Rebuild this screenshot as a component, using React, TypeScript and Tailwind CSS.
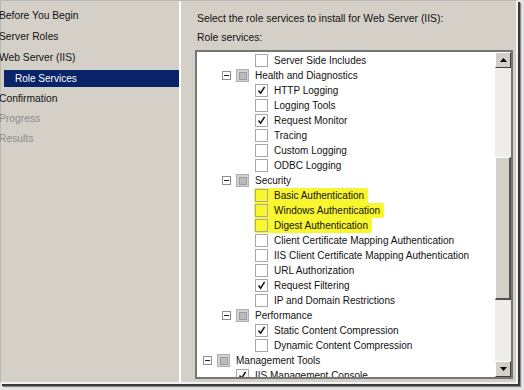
import React from "react";

type Row = {
  label: string;
  level: 0 | 1 | 2;
  group?: boolean;
  checked?: boolean;
  marked?: boolean;
};

const rows: Row[] = [
  { label: "Server Side Includes", level: 2 },
  { label: "Health and Diagnostics", level: 1, group: true },
  { label: "HTTP Logging", level: 2, checked: true },
  { label: "Logging Tools", level: 2 },
  { label: "Request Monitor", level: 2, checked: true },
  { label: "Tracing", level: 2 },
  { label: "Custom Logging", level: 2 },
  { label: "ODBC Logging", level: 2 },
  { label: "Security", level: 1, group: true },
  { label: "Basic Authentication", level: 2, marked: true },
  { label: "Windows Authentication", level: 2, marked: true },
  { label: "Digest Authentication", level: 2, marked: true },
  { label: "Client Certificate Mapping Authentication", level: 2 },
  { label: "IIS Client Certificate Mapping Authentication", level: 2 },
  { label: "URL Authorization", level: 2 },
  { label: "Request Filtering", level: 2, checked: true },
  { label: "IP and Domain Restrictions", level: 2 },
  { label: "Performance", level: 1, group: true },
  { label: "Static Content Compression", level: 2, checked: true },
  { label: "Dynamic Content Compression", level: 2 },
  { label: "Management Tools", level: 0, group: true },
  { label: "IIS Management Console", level: 1, checked: true },
];

const indent = ["pl-[4px]", "pl-[23px]", "pl-[42px]"];

const steps = [
  { label: "Before You Begin", h: "h-[21px]" },
  { label: "Server Roles", h: "h-[21px]" },
  { label: "Web Server (IIS)", h: "h-[21px]" },
  { label: "Role Services", h: "h-[21px]", active: true },
  { label: "Confirmation", h: "h-[20px]" },
  { label: "Progress", h: "h-[20px]", dim: true },
  { label: "Results", h: "h-[20px]", dim: true },
];

function Expander() {
  return (
    <span className="flex h-[9px] w-[9px] items-center justify-center border border-[#8f8f8f] bg-white">
      <span className="h-px w-[5px] bg-[#222]" />
    </span>
  );
}

function GroupBox() {
  return (
    <span className="flex h-[13px] w-[13px] shrink-0 items-center justify-center border border-[#b0b0b0] bg-[#d2d2d2]">
      <span className="h-[8px] w-[8px] border border-[#9c9c9c] bg-[#bcbcbc]" />
    </span>
  );
}

function CheckBox({ checked, clear }: { checked?: boolean; clear?: boolean }) {
  return (
    <span
      className={`flex h-[13px] w-[13px] shrink-0 items-center justify-center border border-[#a8a8a8] ${
        clear ? "bg-transparent" : "bg-white"
      }`}
    >
      {checked && (
        <svg width="9" height="9" viewBox="0 0 9 9">
          <path d="M1.5 4.5 L3.6 7.2 L7.6 0.8" stroke="#111" strokeWidth="1.5" fill="none" />
        </svg>
      )}
    </span>
  );
}

function ArrowButton({ up }: { up?: boolean }) {
  return (
    <div className="flex h-[16px] w-[16px] shrink-0 items-center justify-center border-t border-l border-b border-r border-t-white border-l-white border-b-[#404040] border-r-[#404040] bg-[#d4d0c8]">
      <svg width="7" height="4" viewBox="0 0 7 4">
        {up ? <path d="M0 4 L3.5 0 L7 4 Z" fill="#000" /> : <path d="M0 0 L3.5 4 L7 0 Z" fill="#000" />}
      </svg>
    </div>
  );
}

function TreeRow({ row }: { row: Row }) {
  const box = row.group ? <GroupBox /> : <CheckBox checked={row.checked} clear={row.marked} />;
  return (
    <div className={`flex h-[15px] shrink-0 items-center whitespace-nowrap ${indent[row.level]}`}>
      <span className="flex w-[13px] shrink-0 justify-center">{row.group && <Expander />}</span>
      {row.marked ? (
        <span className="ml-[2px] flex h-[15px] items-center rounded-[2px] bg-[#f8f62e] pl-px pr-[4px]">
          {box}
          <span className="ml-[6px]">{row.label}</span>
        </span>
      ) : (
        <>
          <span className="ml-[3px]">{box}</span>
          <span className="ml-[6px]">{row.label}</span>
        </>
      )}
    </div>
  );
}

export default function App() {
  return (
    <div className="h-[390px] w-[524px] overflow-hidden bg-[#e4e4e4] font-['Liberation_Sans',Arial,sans-serif] text-[10px] leading-[12px] text-[#111]">
      <div className="flex h-[384px] w-[518px] border-t border-l border-r-2 border-b-2 border-t-[#b8b8b8] border-l-[#b8b8b8] border-r-[#f2f2f2] border-b-[#f2f2f2] bg-[#d4d0c8] shadow-[2px_2px_0_#3a3a3a,3px_3px_1px_#8a8a8a]">
        {/* wizard steps */}
        <div className="w-[178px] shrink-0 pt-[4px]">
          {steps.map((s) =>
            s.active ? (
              <div key={s.label} className={`flex items-center ${s.h}`}>
                <div className="ml-[3px] flex h-[17px] w-full items-center bg-[#0a246a] pl-[11px] text-white">
                  {s.label}
                </div>
              </div>
            ) : (
              <div
                key={s.label}
                className={`-ml-[2px] flex items-center text-[10.3px] ${s.h} ${s.dim ? "text-[#8c8c8c]" : ""}`}
              >
                {s.label}
              </div>
            )
          )}
        </div>

        <div className="w-[2px] shrink-0 bg-white" />

        {/* role services */}
        <div className="flex flex-1 flex-col pl-[14px] pr-[3px] pt-[12px]">
          <div className="pl-[2px] text-[10.4px]">Select the role services to install for Web Server (IIS):</div>
          <div className="mt-[7px] pl-[2px] text-[10.4px]">Role services:</div>

          <div className="mt-[6px] flex h-[329px] w-[318px] border-2 border-[#767676] bg-white">
            <div className="flex flex-1 flex-col overflow-hidden pt-px">
              {rows.map((r) => (
                <TreeRow key={r.label} row={r} />
              ))}
            </div>

            <div className="flex w-[16px] shrink-0 flex-col bg-[#eeede9]">
              <ArrowButton up />
              <div className="h-[89px] shrink-0" />
              <div className="h-[143px] shrink-0 border-t border-l border-b-2 border-r-2 border-t-white border-l-white border-b-[#505050] border-r-[#505050] bg-[#d4d0c8]" />
              <div className="flex-1" />
              <ArrowButton />
            </div>
          </div>
        </div>
      </div>
    </div>
  );
}
